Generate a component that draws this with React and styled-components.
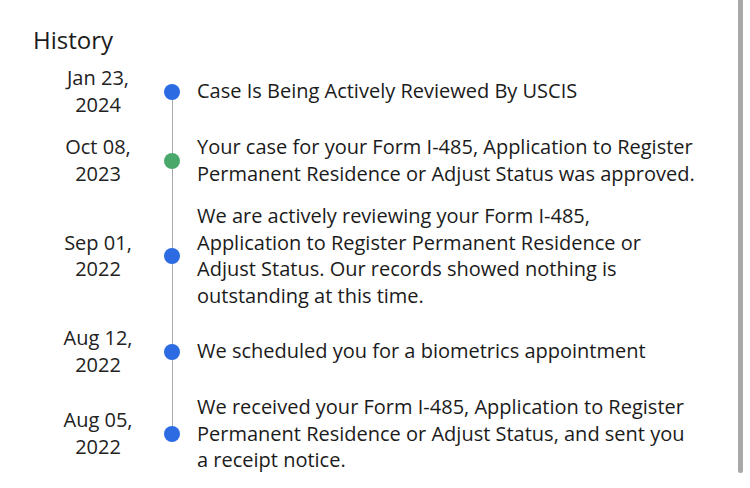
import React from "react"
import styled, { createGlobalStyle } from "styled-components"

const GlobalStyle = createGlobalStyle`
  html, body {
    margin: 0;
    padding: 0;
    background: #ffffff;
  }
  body {
    font-family: "Open Sans", "Noto Sans", sans-serif;
    color: #1b1b1b;
    overflow: hidden;
  }
`

const ROW_GAP = 15.5

const Page = styled.div`
  position: relative;
  width: 750px;
  height: 488px;
  padding: 24px 0 0 33px;
  box-sizing: border-box;
`

const Title = styled.h2`
  margin: 0 0 9px;
  font-size: 24px;
  font-weight: 400;
  line-height: 32px;
`

const List = styled.ul`
  list-style: none;
  margin: 0;
  padding: 0;
  display: flex;
  flex-direction: column;
  gap: ${ROW_GAP}px;
`

const Row = styled.li`
  display: grid;
  grid-template-columns: 98px 50px 499px;
  align-items: center;
  margin-left: 16px;
  font-size: 20px;
  line-height: 26.7px;
`

const DateCol = styled.div`
  text-align: center;
  color: #222;
`

const Rail = styled.div`
  position: relative;
  align-self: stretch;
  display: flex;
  align-items: center;
  justify-content: center;

  &::before {
    content: "";
    position: absolute;
    left: 50%;
    width: 1px;
    margin-left: -0.5px;
    background: #a9a9a9;
    top: ${({ $first }) => ($first ? "50%" : `-${ROW_GAP}px`)};
    bottom: ${({ $last }) => ($last ? "50%" : "0")};
  }
`

const Dot = styled.span`
  position: relative;
  width: 16px;
  height: 16px;
  border-radius: 50%;
  background: ${({ $color }) => $color};
`

const Text = styled.div`
  color: #1b1b1b;
`

const Scrollbar = styled.div`
  position: absolute;
  top: 0;
  right: 7px;
  width: 5px;
  height: 473px;
  background: #a8a8a8;
  border-radius: 0 0 3px 3px;
`

const BLUE = "#2d6be3"
const GREEN = "#4ba86b"

const events = [
  { date: ["Jan 23,", "2024"], color: BLUE, text: "Case Is Being Actively Reviewed By USCIS" },
  {
    date: ["Oct 08,", "2023"],
    color: GREEN,
    text: "Your case for your Form I-485, Application to Register Permanent Residence or Adjust Status was approved.",
  },
  {
    date: ["Sep 01,", "2022"],
    color: BLUE,
    text: "We are actively reviewing your Form I-485, Application to Register Permanent Residence or Adjust Status. Our records showed nothing is outstanding at this time.",
  },
  { date: ["Aug 12,", "2022"], color: BLUE, text: "We scheduled you for a biometrics appointment" },
  {
    date: ["Aug 05,", "2022"],
    color: BLUE,
    text: "We received your Form I-485, Application to Register Permanent Residence or Adjust Status, and sent you a receipt notice.",
  },
]

export default function App() {
  return (
    <>
      <GlobalStyle />
      <Page>
        <Title>History</Title>
        <List>
          {events.map((e, i) => (
            <Row key={i}>
              <DateCol>
                {e.date[0]}
                <br />
                {e.date[1]}
              </DateCol>
              <Rail $first={i === 0} $last={i === events.length - 1}>
                <Dot $color={e.color} />
              </Rail>
              <Text>{e.text}</Text>
            </Row>
          ))}
        </List>
        <Scrollbar />
      </Page>
    </>
  )
}
